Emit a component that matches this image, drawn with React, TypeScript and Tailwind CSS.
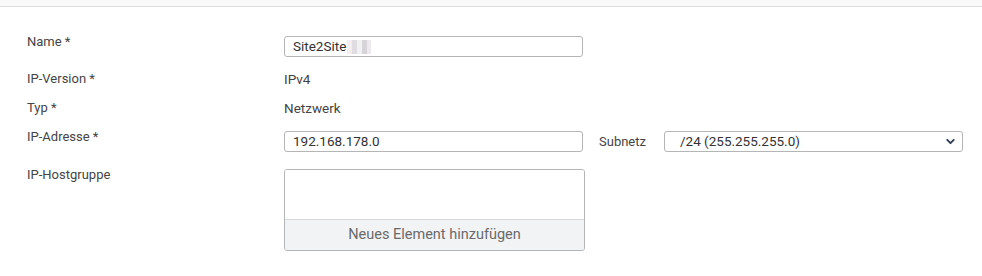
import { ChevronDown } from "lucide-react";

const font = { fontFamily: "Roboto, 'Liberation Sans', sans-serif" };

const Label = ({ children }: { children: React.ReactNode }) => (
  <div className="w-[257px] shrink-0 -mt-0.5 leading-4 text-[13px] text-[#444]">{children}</div>
);

export default function App() {
  return (
    <div className="w-[982px] h-[276px] bg-white text-[13px] text-[#333]" style={font}>
      {/* top strip */}
      <div className="h-[7px] bg-[#f9f9f9] border-b border-[#dcdcdc]" />

      <div className="pl-[27px] pt-[29px]">
        {/* Name */}
        <div className="flex items-start">
          <Label>Name *</Label>
          <div className="w-[299px] h-[21px] border border-[#b5b5b5] rounded-[3px] flex items-center pl-2 text-[13.5px] text-[#333]">
            <span>Site2Site</span>
            <span className="flex items-center h-[14px] ml-[1px]">
              <span className="w-[5px] h-[14px] bg-[#f3eef0]" />
              <span className="w-[5px] h-[14px] bg-[#e0dde2]" />
              <span className="w-[5px] h-[14px] bg-[#f1f0f2]" />
              <span className="w-[5px] h-[14px] bg-[#d6d4d8]" />
              <span className="w-[4px] h-[14px] bg-[#eceaee]" />
            </span>
          </div>
        </div>

        {/* IP-Version */}
        <div className="flex items-start mt-[14px] leading-4">
          <div className="w-[257px] shrink-0 text-[#444]">IP-Version *</div>
          <div className="text-[#444] text-[13.5px]">IPv4</div>
        </div>

        {/* Typ */}
        <div className="flex items-start mt-[13px] leading-4">
          <div className="w-[257px] shrink-0 text-[#444]">Typ *</div>
          <div className="text-[#444] text-[13.5px]">Netzwerk</div>
        </div>

        {/* IP-Adresse */}
        <div className="flex items-start mt-[15px]">
          <Label>IP-Adresse *</Label>
          <div className="w-[299px] h-[21px] border border-[#b5b5b5] rounded-[3px] flex items-center pl-2 text-[13.5px] text-[#333]">
            192.168.178.0
          </div>
          <div className="w-[81px] h-[21px] pl-[16px] flex items-center text-[#444]">Subnetz</div>
          <div className="w-[299px] h-[21px] border border-[#b5b5b5] rounded-[3px] flex items-center justify-between pl-[15px] pr-[5px] text-[13.5px] text-[#333]">
            <span>/24 (255.255.255.0)</span>
            <ChevronDown size={13} strokeWidth={3.5} className="text-[#2c3e50]" />
          </div>
        </div>

        {/* IP-Hostgruppe */}
        <div className="flex items-start mt-[17px]">
          <Label>IP-Hostgruppe</Label>
          <div className="w-[301px] h-[82px] border border-[#b5b5b5] rounded-[3px] flex flex-col overflow-hidden">
            <div className="flex-1 bg-white" />
            <div className="h-[31px] border-t border-[#d8d8d8] bg-[#f2f3f5] flex items-center justify-center text-[14.5px] text-[#6a6a6a]">
              Neues Element hinzufügen
            </div>
          </div>
        </div>
      </div>
    </div>
  );
}
